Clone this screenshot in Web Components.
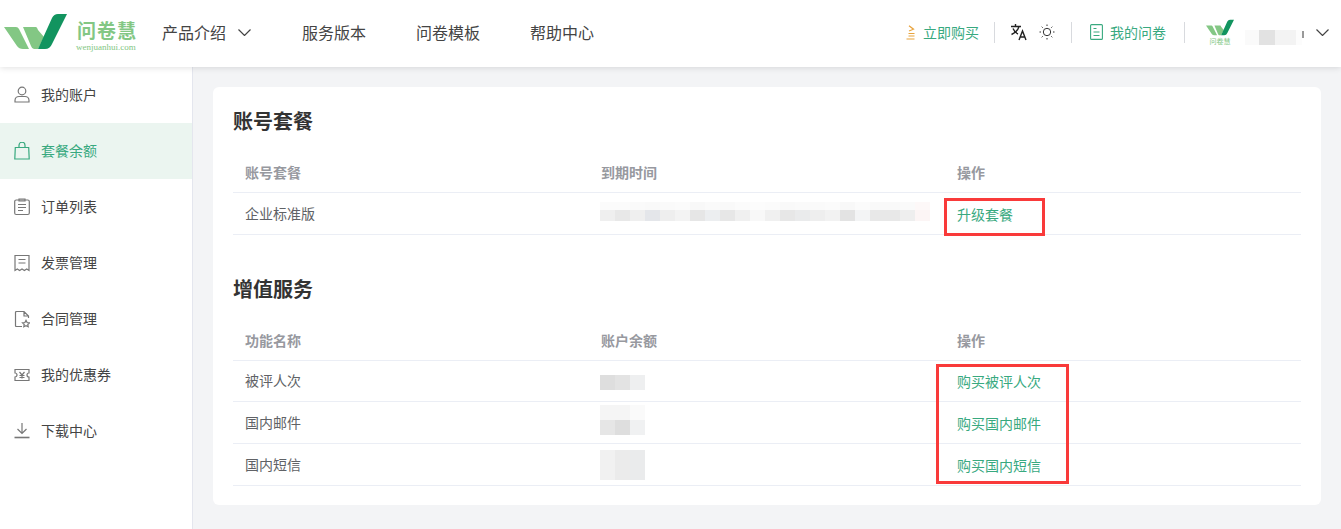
<!DOCTYPE html>
<html lang="zh">
<head>
<meta charset="utf-8">
<title>套餐余额</title>
<style>
    html, body { margin: 0; height: 100%; }
    body {
        font-family: "Noto Sans CJK SC", "Liberation Sans", sans-serif;
        background: #f3f4f6;
        overflow: hidden;
    }
</style>
</head>
<body>
<wj-app></wj-app>

<script>
const LOGO = `
    <path d="M4 27H16Q18 27 19 29L29 49H23Q19 49 17 46Z" fill="#83c784"/>
    <path d="M23 27H36Q37 27 38 30L44 37L38 49H34Q32 49 31 46Z" fill="#83c784"/>
    <path d="M38 49L52 18Q54 14 58 14H67L52 44Q50 49 45 49Z" fill="#12945f"/>`;

const CHEVRON = `<svg width="13" height="7" viewBox="0 0 13 7" fill="none" stroke="#444" stroke-width="1.2"><path d="M.5.5l6 6 6-6"/></svg>`;

class WjHeader extends HTMLElement {
    constructor() {
        super();
        this.attachShadow({ mode: 'open' });
    }

    connectedCallback() {
        this.shadowRoot.innerHTML = `
            <style>
                :host {
                    display: flex;
                    align-items: center;
                    height: 67px;
                    background: #fff;
                    box-shadow: 0 1px 6px rgba(0, 0, 0, .12);
                    position: relative;
                    z-index: 2;
                }
                .logo { display: block; margin-right: 8px; flex: none; }
                .brand { width: 62px; margin: 5px 24px 0 0; flex: none; color: #83c784; }
                .brand b { display: block; font-size: 19px; line-height: 22px; font-weight: 700; letter-spacing: 1px; padding-left: 1px; }
                .brand small {
                    display: block;
                    font: 9px/12px "Liberation Serif", serif;
                    white-space: nowrap;
                }
                nav { display: flex; flex: 1; align-items: center; gap: 50px; font-size: 16px; color: #444; margin-bottom: 3px; }
                nav span { display: flex; align-items: center; gap: 12px; white-space: nowrap; }
                nav svg { margin-right: 1px; }
                .right { display: flex; align-items: center; font-size: 14px; color: #38a97f; margin: 0 12px 3px 0; }
                .item { display: flex; align-items: center; white-space: nowrap; }
                .sep { width: 1px; height: 21px; background: #d8dade; }
                .user { width: 59px; height: 15px; margin: 10px 12px 0 11px; display: grid; grid-template-columns: 14px 16px 21px 6px 2px; }
                .user i { display: block; }
                .tiny { display: flex; flex-direction: column; align-items: center; width: 28px; }
                .tiny em { font-style: normal; font-size: 7px; line-height: 8px; color: #83c784; margin-top: 1px; }
            </style>
            <svg class="logo" width="68" height="67" viewBox="0 0 68 67">${LOGO}</svg>
            <div class="brand">
                <b>问卷慧</b>
                <small>wenjuanhui.com</small>
            </div>
            <nav>
                <span>产品介绍 ${CHEVRON}</span>
                <span>服务版本</span>
                <span>问卷模板</span>
                <span>帮助中心</span>
            </nav>
            <div class="right">
                <div class="item" style="gap:8px">
                    <svg width="9" height="15" viewBox="0 0 9 15" fill="none" stroke="#e8a33d" stroke-width="1.200">
                        <path d="M3 .8l4.500 3.400L3 6M2.500 8.500h6M2.500 11h6M.5 14h8"/>
                    </svg>
                    <span>立即购买</span>
                </div>
                <div class="sep" style="margin:0 15px"></div>
                <svg width="18" height="18" viewBox="0 0 18 18" fill="none" stroke="#222" stroke-width="1.400">
                    <path d="M1 3.500h10M5.500 1v2.500M9 3.500C8 7 5 10 1.500 11.500M3 5.500c1 2.500 3 4.500 5 5.500M9 17l3.500-9 3.500 9M10.300 14h4.500"/>
                </svg>
                <svg style="margin-left:11px" width="16" height="16" viewBox="0 0 16 16" fill="none" stroke="#333" stroke-width="1">
                    <circle cx="8" cy="8" r="3.700"/>
                    <path d="M8 .5v1.500M8 14v1.500M.5 8H2M14 8h1.500M2.700 2.700l1 1M12.300 12.300l1 1M2.700 13.300l1-1M12.300 3.700l1-1"/>
                </svg>
                <div class="sep" style="margin:0 18px 0 16px"></div>
                <div class="item" style="gap:7px">
                    <svg width="13" height="16" viewBox="0 0 13 16" fill="none" stroke="#38a97f" stroke-width="1.100">
                        <rect x=".6" y=".6" width="11.800" height="14.800" rx="1"/>
                        <path d="M3.500 4.500h3M3.500 8h6M3.500 11.500h6"/>
                    </svg>
                    <span>我的问卷</span>
                </div>
                <div class="sep" style="margin:0 21px 0 18px"></div>
                <div class="tiny">
                    <svg width="28" height="17" viewBox="4 14 63 35">${LOGO}</svg>
                    <em>问卷慧</em>
                </div>
                <div class="user">
                    <i style="background:#fafafa"></i><i style="background:#e2e2e2"></i><i style="background:#f3f3f3"></i><i style="background:#fcfcfc"></i><i style="background:#999;height:7px;margin-top:1px"></i>
                </div>
                ${CHEVRON}
            </div>
        `;
    }
}

const MENU_ICONS = {
    user: `<circle cx="8" cy="5" r="3.800"/><path d="M1 16v-1.500C1 12 3 10.500 5 10.500h6c2 0 4 1.500 4 4V16z"/>`,
    bag: `<path d="M1.300 5.500h13.400l.5 11.500H.8zM5 5.500V3.200a3 3 0 0 1 6 0v2.300"/>`,
    list: `<rect x=".7" y="2" width="14.600" height="14.500" rx="1.500"/><path d="M5 1h6v2H5zM4 6.500h8M4 9.500h8M4 12.500h5"/>`,
    receipt: `<path d="M1 1.500h14v15l-2.300-1.500-2.300 1.500L8 15l-2.400 1.500L3.300 15 1 16.500zM4.500 5.500h7M4.500 9h7"/>`,
    contract: `<path d="M8 16.500H2.500Q1.500 16.500 1.500 15.500V2.500Q1.500 1.500 2.500 1.500H10L14.500 6V8M10 1.500V6H14.500"/><path d="M12 10.300l1.100 2.200 2.400.3-1.700 1.700.4 2.300-2.200-1.100-2.200 1.100.4-2.300-1.700-1.700 2.400-.3z"/>`,
    coupon: `<path d="M1 3.500h14V7a2 2 0 0 0 0 4v3.500H1V11a2 2 0 0 0 0-4zM5.500 6L8 9l2.500-3M8 9v3.500M5.500 9.500h5M5.500 11.500h5"/>`,
    download: `<path d="M8 1v10M3.500 7L8 11.500 12.500 7"/><path d="M.5 15.500h15" stroke-width="1.600"/>`
};

class WjMenuItem extends HTMLElement {
    constructor() {
        super();
        this.attachShadow({ mode: 'open' });
    }

    connectedCallback() {
        const icon = MENU_ICONS[this.getAttribute('icon')];
        this.shadowRoot.innerHTML = `
            <style>
                :host {
                    display: flex;
                    align-items: center;
                    gap: 11px;
                    height: 56px;
                    padding-left: 14px;
                    font-size: 14px;
                    color: #444;
                }
                :host([active]) { background: #ebf5f0; color: #38a97f; }
                svg { stroke: #777; flex: none; }
                :host([active]) svg { stroke: #38a97f; }
                span { margin-bottom: 2px; }
            </style>
            <svg width="16" height="18" viewBox="0 0 16 18" fill="none" stroke-width="1.200">${icon}</svg>
            <span><slot></slot></span>
        `;
    }
}

class WjSidebar extends HTMLElement {
    constructor() {
        super();
        this.attachShadow({ mode: 'open' });
    }

    connectedCallback() {
        this.shadowRoot.innerHTML = `
            <style>
                :host {
                    display: block;
                    width: 192px;
                    flex: none;
                    background: #fff;
                    border-right: 1px solid #e4e6ee;
                }
            </style>
            <slot></slot>
        `;
    }
}

// blurred out values in the table, bands of grey cells: "height:c c c|height:c c c"
class WjMask extends HTMLElement {
    constructor() {
        super();
        this.attachShadow({ mode: 'open' });
    }

    connectedCallback() {
        const bands = this.getAttribute('bands').split('|').map(band => {
            const [h, cells] = band.split(':');
            const row = cells.split(' ').map(c => `<i style="background:#${c}"></i>`).join('');
            return `<div style="height:${h}px">${row}</div>`;
        });
        this.shadowRoot.innerHTML = `
            <style>
                :host { display: block; margin-left: -1px; }
                div { display: flex; }
                i { display: block; width: 15px; }
            </style>
            ${bands.join('')}
        `;
    }
}

class WjSection extends HTMLElement {
    constructor() {
        super();
        this.attachShadow({ mode: 'open' });
    }

    connectedCallback() {
        this.shadowRoot.innerHTML = `
            <style>
                :host { display: block; }
                h2 {
                    margin: 0;
                    font-size: 20px;
                    line-height: 28px;
                    font-weight: 700;
                    color: #333;
                }
            </style>
            <h2>${this.getAttribute('title')}</h2>
            <slot></slot>
        `;
    }
}

class WjTable extends HTMLElement {
    constructor() {
        super();
        this.attachShadow({ mode: 'open' });
    }

    connectedCallback() {
        const cols = this.getAttribute('cols').split(',');
        this.shadowRoot.innerHTML = `
            <style>
                :host { display: block; margin-top: 20px; }
                .head {
                    display: grid;
                    grid-template-columns: 356px 356px 356px;
                    height: 33px;
                    padding-bottom: 4px;
                    align-items: center;
                    font-size: 14px;
                    font-weight: 700;
                    color: #97999f;
                    border-bottom: 1px solid #ebeef5;
                }
                .head span { padding-left: 12px; }
            </style>
            <div class="head">${cols.map(c => `<span>${c}</span>`).join('')}</div>
            <slot></slot>
        `;
    }
}

class WjRow extends HTMLElement {
    constructor() {
        super();
        this.attachShadow({ mode: 'open' });
    }

    connectedCallback() {
        this.shadowRoot.innerHTML = `
            <style>
                :host {
                    display: grid;
                    grid-template-columns: 356px 356px 356px;
                    height: 39px;
                    padding-bottom: 2px;
                    align-items: center;
                    font-size: 14px;
                    color: #606266;
                    border-bottom: 1px solid #ebeef5;
                }
                div { padding-left: 12px; }
                .action { color: #38a97f; padding-top: 2px; }
            </style>
            <div><slot name="name"></slot></div>
            <div><slot name="value"></slot></div>
            <div class="action"><slot name="action"></slot></div>
        `;
    }
}

class WjApp extends HTMLElement {
    constructor() {
        super();
        this.attachShadow({ mode: 'open' });
    }

    connectedCallback() {
        this.shadowRoot.innerHTML = `
            <style>
                :host { display: flex; flex-direction: column; height: 100vh; }
                .body { display: flex; flex: 1; }
                main { flex: 1; padding: 20px 20px 24px 20px; }
                .card {
                    position: relative;
                    background: #fff;
                    border-radius: 6px;
                    padding: 20px;
                    height: 378px;
                }
                wj-section + wj-section { margin-top: 40px; }
                .mark {
                    position: absolute;
                    border: 3px solid #f93a3a;
                    box-sizing: border-box;
                }
            </style>
            <wj-header></wj-header>
            <div class="body">
                <wj-sidebar>
                    <wj-menu-item icon="user">我的账户</wj-menu-item>
                    <wj-menu-item icon="bag" active>套餐余额</wj-menu-item>
                    <wj-menu-item icon="list">订单列表</wj-menu-item>
                    <wj-menu-item icon="receipt">发票管理</wj-menu-item>
                    <wj-menu-item icon="contract">合同管理</wj-menu-item>
                    <wj-menu-item icon="coupon">我的优惠券</wj-menu-item>
                    <wj-menu-item icon="download">下载中心</wj-menu-item>
                </wj-sidebar>
                <main>
                    <div class="card">
                        <wj-section title="账号套餐">
                            <wj-table cols="账号套餐,到期时间,操作">
                                <wj-row>
                                    <span slot="name">企业标准版</span>
                                    <wj-mask slot="value" style="margin-top:-2px" bands="8:fbfbfb fbfbfb fafafa f9f9f9 fafafa fbfbfb f8f8f8 fafafa f9f9f9 fbfbfb fcfcfc fbfbfb f9f9f9 fafafa fafafa fbfbfb f8f8f8 fbfbfb f9f9f9 f9f9f9 fafafa fdf8f8|11:efefef e8e8e8 efefef e4e6ea eeeeee f3f3f3 e6e6e6 eceef0 e7e7e7 f0f0f0 f8f8f8 f0f0f0 e7e7e7 eaebec eeeeee f2f2f2 e3e3e3 f3f4f5 e8e8e8 e8e8e8 eeeeee fcf5f5"></wj-mask>
                                    <span slot="action">升级套餐</span>
                                </wj-row>
                            </wj-table>
                        </wj-section>
                        <wj-section title="增值服务">
                            <wj-table cols="功能名称,账户余额,操作">
                                <wj-row style="height:38px">
                                    <span slot="name">被评人次</span>
                                    <wj-mask slot="value" style="margin-top:5px" bands="15:dedede e3e3e3 eeeff0"></wj-mask>
                                    <span slot="action">购买被评人次</span>
                                </wj-row>
                                <wj-row>
                                    <span slot="name">国内邮件</span>
                                    <wj-mask slot="value" style="margin-top:-3px" bands="15:f5f5f5 f5f5f5 fafafa|15:e6e6e6 dedede f0f1f2"></wj-mask>
                                    <span slot="action">购买国内邮件</span>
                                </wj-row>
                                <wj-row>
                                    <span slot="name">国内短信</span>
                                    <wj-mask slot="value" style="margin-top:3px" bands="30:f1f1f1 ebebeb eaebec"></wj-mask>
                                    <span slot="action">购买国内短信</span>
                                </wj-row>
                            </wj-table>
                        </wj-section>
                        <div class="mark" style="left:731px;top:111px;width:101px;height:38px"></div>
                        <div class="mark" style="left:723px;top:277px;width:133px;height:120px"></div>
                    </div>
                </main>
            </div>
        `;
    }
}

customElements.define('wj-header', WjHeader);
customElements.define('wj-menu-item', WjMenuItem);
customElements.define('wj-sidebar', WjSidebar);
customElements.define('wj-mask', WjMask);
customElements.define('wj-section', WjSection);
customElements.define('wj-table', WjTable);
customElements.define('wj-row', WjRow);
customElements.define('wj-app', WjApp);
</script>
</body>
</html>
